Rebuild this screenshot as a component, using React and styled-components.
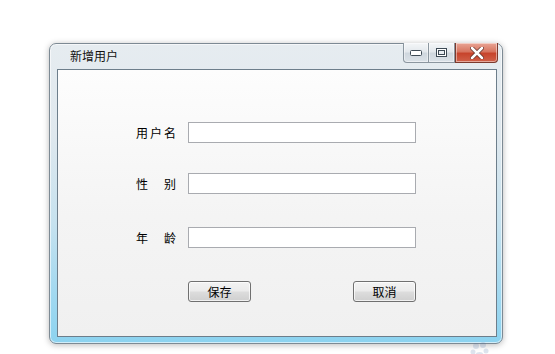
import React from "react"
import styled, { createGlobalStyle } from "styled-components"

const Global = createGlobalStyle`
  html, body {
    margin: 0;
    padding: 0;
    background: #ffffff;
    font-family: "Noto Sans CJK SC", "Noto Sans", sans-serif;
  }
`

const Page = styled.div`
  position: relative;
  width: 555px;
  height: 354px;
  padding: 43px 0 0 49px;
  box-sizing: border-box;
  overflow: hidden;
`

const Window = styled.div`
  width: 454px;
  height: 301px;
  box-sizing: border-box;
  display: flex;
  flex-direction: column;
  padding: 0 5px 6px 7px;
  border: 1px solid #7d8a94;
  border-radius: 7px;
  background: linear-gradient(
    to bottom,
    #e6ecf0 0%,
    #dfe8ee 30%,
    #c6e2ef 60%,
    #a4d9f0 82%,
    #8cd3f0 100%
  );
  box-shadow: 0 1px 6px rgba(0, 0, 0, 0.28), inset 0 0 0 1px rgba(255, 255, 255, 0.6);
`

const TitleBar = styled.div`
  height: 25px;
  display: flex;
  align-items: flex-start;
  justify-content: space-between;
`

const Title = styled.div`
  padding: 5px 0 0 13px;
  font-size: 12px;
  line-height: 14px;
  color: #111;
`

const Controls = styled.div`
  display: flex;
  margin-top: -1px;
  margin-right: -1px;
`

const CtlButton = styled.div`
  width: ${(p) => p.$w}px;
  height: 20px;
  box-sizing: border-box;
  display: flex;
  align-items: center;
  justify-content: center;
  border: 1px solid ${(p) => (p.$close ? "#7b3a2e" : "#8b969f")};
  border-left-width: ${(p) => (p.$first || p.$close ? 1 : 0)}px;
  border-top: none;
  border-radius: ${(p) => (p.$first ? "0 0 0 4px" : p.$close ? "0 0 4px 0" : "0")};
  background: ${(p) =>
    p.$close
      ? "linear-gradient(to bottom, #e9a595 0%, #d77560 45%, #c7442c 55%, #d0614a 100%)"
      : "linear-gradient(to bottom, #f4f6f8 0%, #e3e8ec 45%, #cfd7de 55%, #dbe2e8 100%)"};
  box-shadow: inset 0 0 0 1px rgba(255, 255, 255, 0.45);
`

const Client = styled.div`
  flex: 1;
  border: 1px solid #6d7e8b;
  background: linear-gradient(to bottom, #fdfdfd 0%, #f4f4f4 55%, #f0f0f0 100%);
  padding: 52px 0 0 78px;
  box-sizing: border-box;
`

const Row = styled.div`
  display: flex;
  align-items: center;
  height: 21px;
  margin-bottom: ${(p) => p.$gap}px;
`

const Label = styled.div`
  width: 40px;
  margin-right: 12px;
  display: flex;
  justify-content: space-between;
  font-size: 12px;
  color: #000;
`

const Input = styled.div`
  width: 228px;
  height: 21px;
  box-sizing: border-box;
  border: 1px solid #a9abb0;
  background: #fff;
`

const Buttons = styled.div`
  display: flex;
  gap: 102px;
  padding-left: 52px;
`

const Button = styled.div`
  width: 63px;
  height: 21px;
  box-sizing: border-box;
  border: 1px solid #707070;
  border-radius: 3px;
  display: flex;
  align-items: center;
  justify-content: center;
  font-size: 12px;
  color: #000;
  background: linear-gradient(to bottom, #f3f3f3 0%, #ebebeb 48%, #dddddd 52%, #cfcfcf 100%);
  box-shadow: inset 0 0 0 1px rgba(255, 255, 255, 0.7);
`

const Watermark = styled.div`
  position: absolute;
  left: 470px;
  top: 338px;
  opacity: 0.18;
`

const MinIcon = () => (
  <svg width="12" height="6" viewBox="0 0 12 6">
    <rect x="0.5" y="0.5" width="11" height="5" rx="1" fill="#fff" stroke="#3d4a55" />
  </svg>
)

const MaxIcon = () => (
  <svg width="11" height="9" viewBox="0 0 11 9">
    <rect x="0.5" y="0.5" width="10" height="8" fill="#fff" stroke="#3d4a55" />
    <rect x="2.5" y="2.5" width="6" height="4" fill="#e8edf1" stroke="#3d4a55" />
  </svg>
)

const CloseIcon = () => (
  <svg width="14" height="12" viewBox="0 0 14 12">
    <path d="M2 1 L12 11 M12 1 L2 11" stroke="#5a2a22" strokeWidth="4" strokeLinecap="round" />
    <path d="M2 1 L12 11 M12 1 L2 11" stroke="#ffffff" strokeWidth="2.6" strokeLinecap="round" />
  </svg>
)

const Paw = () => (
  <svg width="60" height="16" viewBox="0 0 60 16">
    <circle cx="6" cy="5" r="3" fill="#4a6fa5" />
    <circle cx="13" cy="4" r="3" fill="#4a6fa5" />
    <circle cx="3" cy="11" r="2.5" fill="#4a6fa5" />
    <circle cx="16" cy="10" r="2.5" fill="#4a6fa5" />
    <ellipse cx="9.5" cy="14" rx="4" ry="3" fill="#4a6fa5" />
  </svg>
)

const fields = [
  { label: ["用", "户", "名"], gap: 30 },
  { label: ["性", "别"], gap: 33 },
  { label: ["年", "龄"], gap: 33 },
]

const App = () => {
  return (
    <Page>
      <Global />
      <Window>
        <TitleBar>
          <Title>新增用户</Title>
          <Controls>
            <CtlButton $w={26} $first>
              <MinIcon />
            </CtlButton>
            <CtlButton $w={26}>
              <MaxIcon />
            </CtlButton>
            <CtlButton $w={43} $close>
              <CloseIcon />
            </CtlButton>
          </Controls>
        </TitleBar>
        <Client>
          {fields.map((f, i) => (
            <Row key={i} $gap={f.gap}>
              <Label>
                {f.label.map((c) => (
                  <span key={c}>{c}</span>
                ))}
              </Label>
              <Input />
            </Row>
          ))}
          <Buttons>
            <Button>保存</Button>
            <Button>取消</Button>
          </Buttons>
        </Client>
      </Window>
      <Watermark>
        <Paw />
      </Watermark>
    </Page>
  )
}

export default App
